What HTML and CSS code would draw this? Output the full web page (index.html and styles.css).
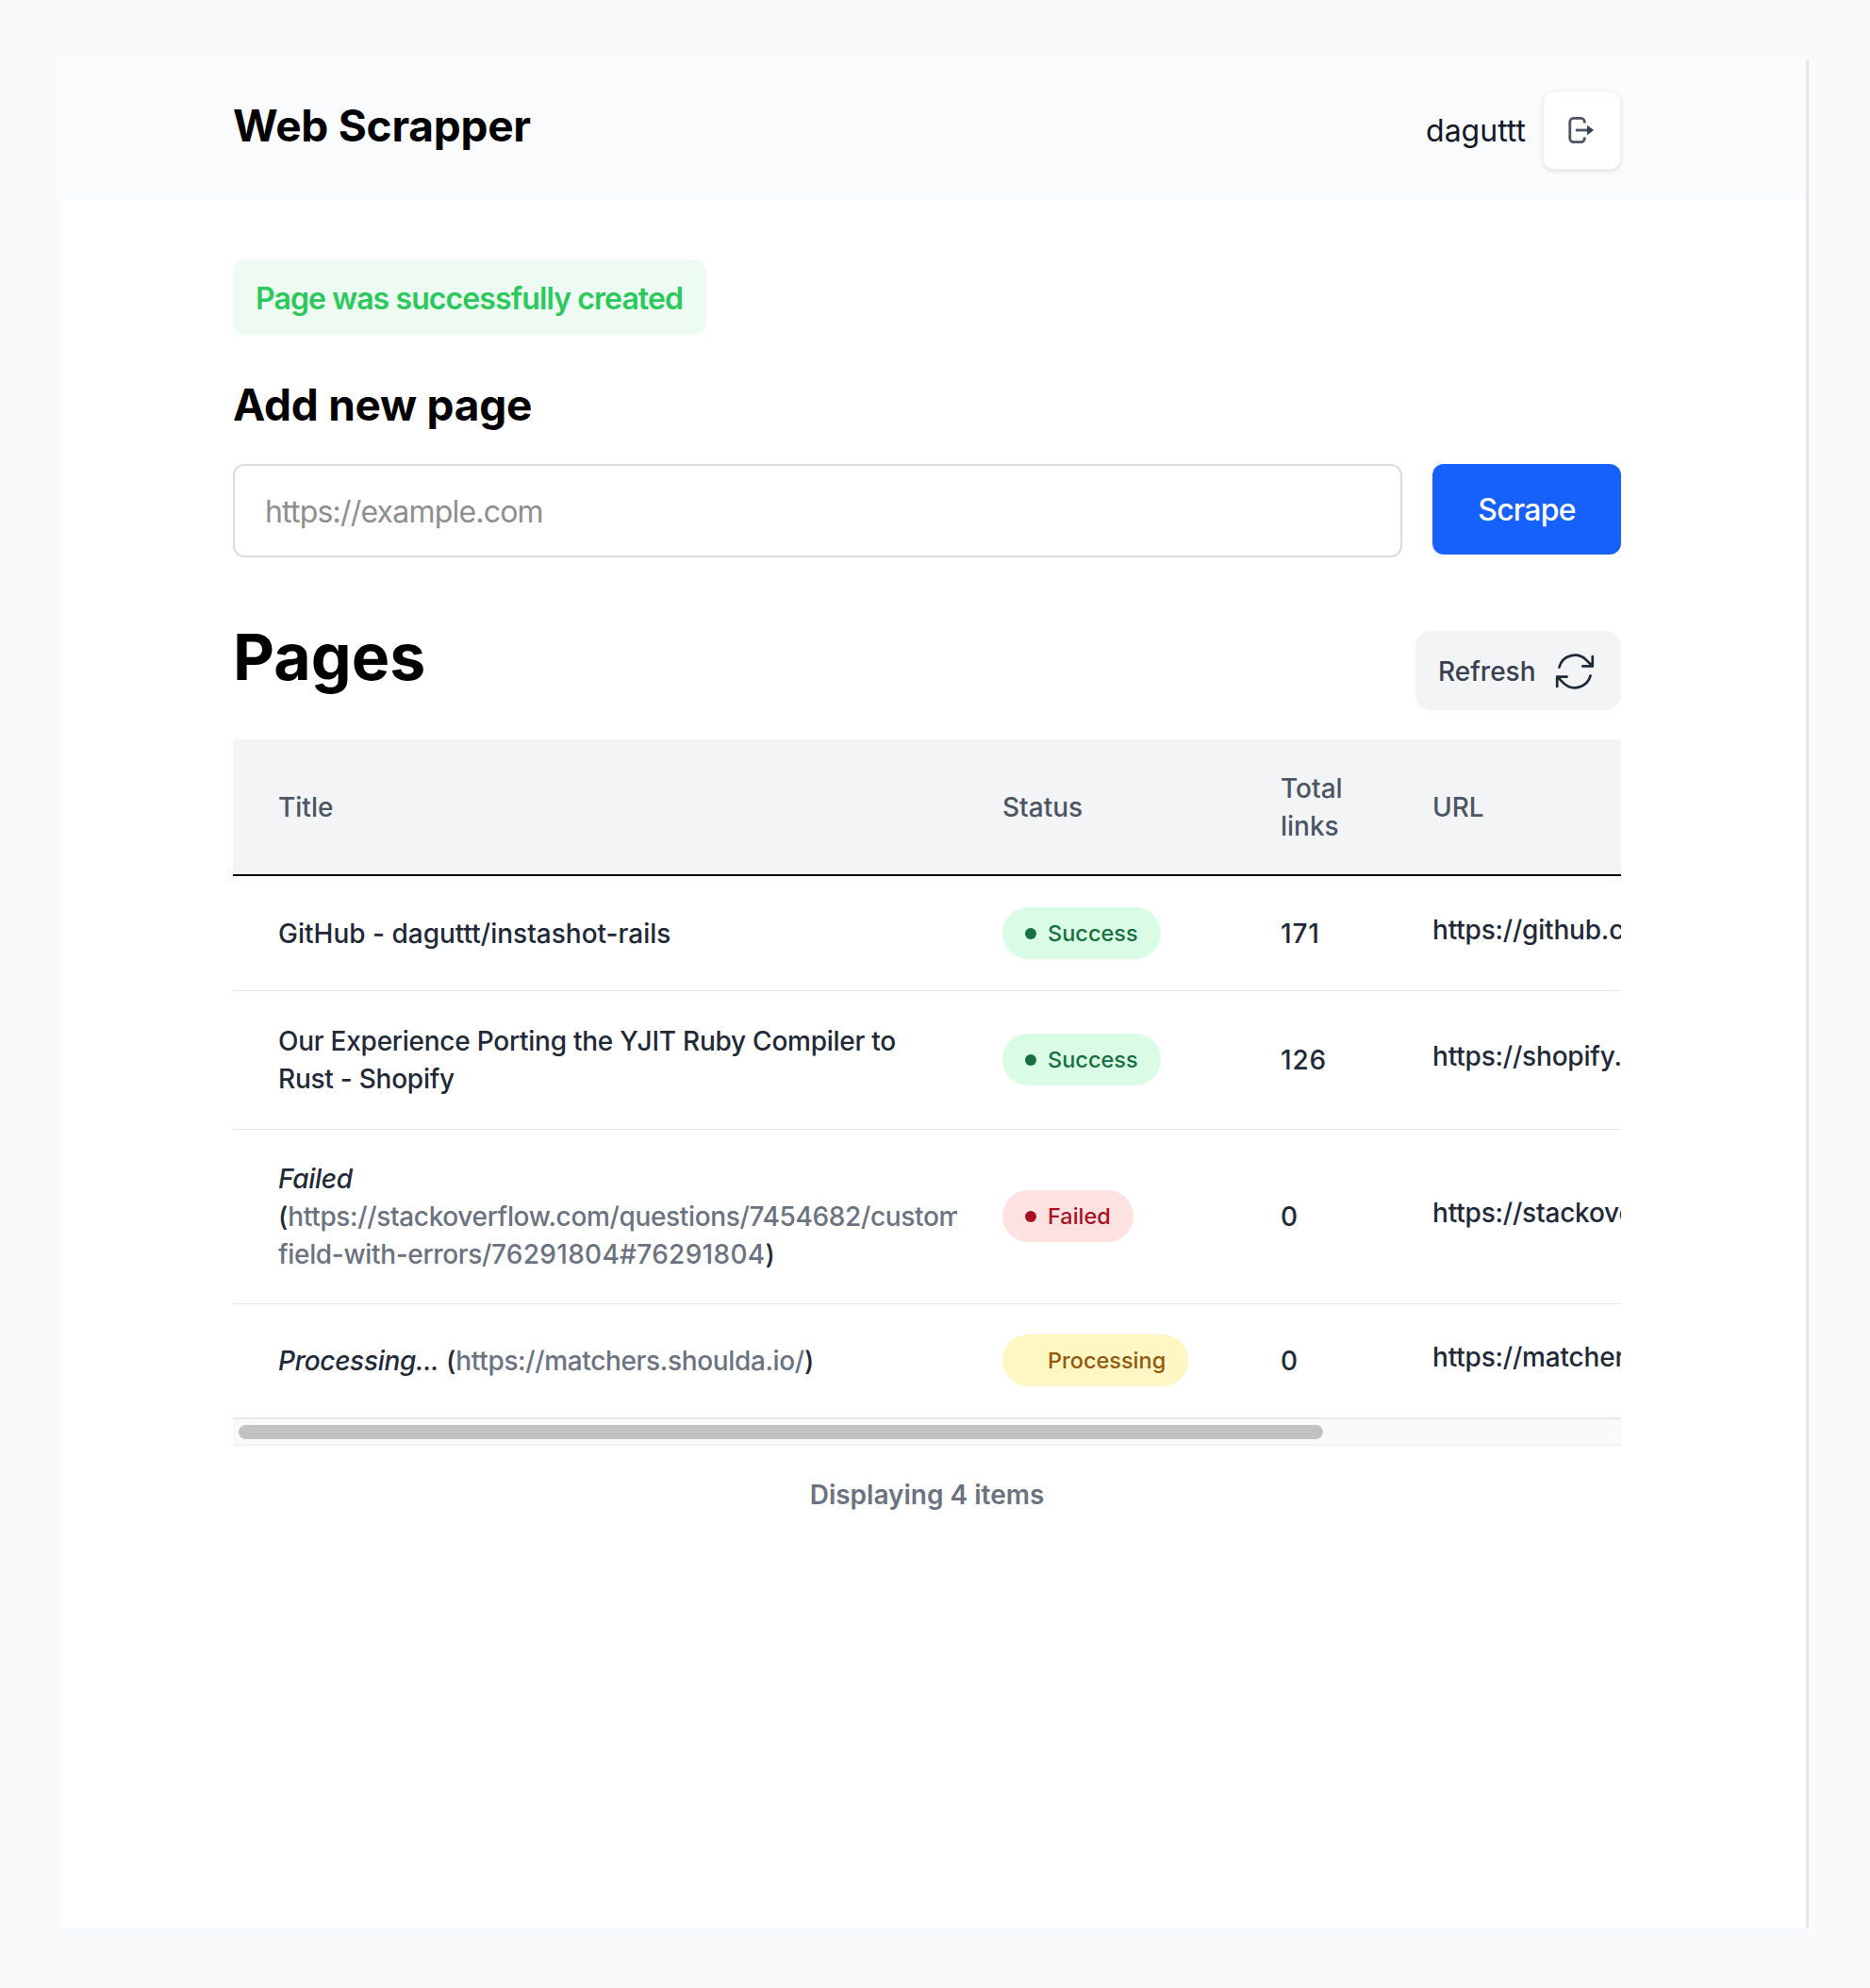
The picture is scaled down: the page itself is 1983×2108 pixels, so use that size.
FILE: index.html
```html
<!DOCTYPE html>
<html lang="en">
<head>
<meta charset="utf-8">
<title>Web Scrapper</title>
<link rel="stylesheet" href="styles.css">
</head>
<body>
<div class="frame">
  <header class="topbar">
    <h1 class="brand">Web Scrapper</h1>
    <div class="user">
      <span class="username">daguttt</span>
      <button class="logout" type="button" aria-label="Log out">
        <svg class="logout-icon" viewBox="0 0 30 32" fill="none" aria-hidden="true">
          <path d="M19 8V6.500A4 4 0 0 0 15 2.500H6.500A4 4 0 0 0 2.500 6.500V25.500A4 4 0 0 0 6.500 29.500H15A4 4 0 0 0 19 25.500V24" stroke="#4b5563" stroke-width="3"/>
          <path d="M9 16H23" stroke="#4b5563" stroke-width="3"/>
          <path d="M22 10.500L29.500 16L22 21.500Z" fill="#374151"/>
        </svg>
      </button>
    </div>
  </header>
  <main class="content">
    <div class="flash">Page was successfully created</div>
    <h2 class="section-title">Add new page</h2>
    <form class="add-form">
      <input class="url-input" type="text" placeholder="https://example.com">
      <button class="scrape" type="button">Scrape</button>
    </form>
    <div class="pages-head">
      <h2 class="pages-title">Pages</h2>
      <button class="refresh" type="button">
        <span>Refresh</span>
        <svg class="refresh-icon" viewBox="0 0 24 24" fill="none" stroke="#1f2937" stroke-width="1.300" stroke-linecap="round" stroke-linejoin="round" aria-hidden="true">
          <path d="M16.023 9.348h4.992v-.001M2.985 19.644v-4.992m0 0h4.992m-4.993 0l3.181 3.183a8.25 8.25 0 0013.803-3.7M4.031 9.865a8.25 8.250 0 0113.803-3.700l3.181 3.182m0-4.991v4.990"/>
        </svg>
      </button>
    </div>
    <div class="table-wrap">
      <table class="pages-table">
        <colgroup>
          <col class="col-title"><col class="col-status"><col class="col-total"><col class="col-url">
        </colgroup>
        <thead>
          <tr><th>Title</th><th>Status</th><th>Total links</th><th>URL</th></tr>
        </thead>
        <tbody>
          <tr>
            <td><div class="title-cell">GitHub - daguttt/instashot-rails</div></td>
            <td><span class="pill pill-success"><i class="dot"></i>Success</span></td>
            <td class="num">171</td>
            <td><span class="url">https://github.com/daguttt/instashot-rails</span></td>
          </tr>
          <tr>
            <td><div class="title-cell title-tight">Our Experience Porting the YJIT Ruby Compiler to Rust - Shopify</div></td>
            <td><span class="pill pill-success"><i class="dot"></i>Success</span></td>
            <td class="num">126</td>
            <td><span class="url">https://shopify.engineering/porting-yjit-ruby-compiler-to-rust</span></td>
          </tr>
          <tr>
            <td><div class="title-cell"><em>Failed</em> (<a class="link" href="#">https://stackoverflow.com/questions/7454682/custom-field-with-errors/<span class="digits">76291804#76291804</span></a>)</div></td>
            <td><span class="pill pill-failed"><i class="dot"></i>Failed</span></td>
            <td class="num">0</td>
            <td><span class="url">https://stackoverflow.com/questions/7454682/custom-field-with-errors</span></td>
          </tr>
          <tr>
            <td><div class="title-cell"><em>Processing...</em> (<a class="link" href="#">https://matchers.shoulda.io/</a>)</div></td>
            <td><span class="pill pill-processing"><i class="dot"></i>Processing</span></td>
            <td class="num">0</td>
            <td><span class="url">https://matchers.shoulda.io/</span></td>
          </tr>
        </tbody>
      </table>
    </div>
    <div class="scrollbar"><div class="thumb"></div></div>
    <p class="count">Displaying 4 items</p>
  </main>
</div>
</body>
</html>
```
FILE: styles.css
```css
* { box-sizing: border-box; }
html, body { margin: 0; }
body {
  background: #f9fafc;
  padding: 64px 65px 64px 64px;
  font-family: Inter, "Noto Sans", sans-serif;
  color: #1f2937;
}
.frame {
  height: 1980px;
  background: #fff;
  border-right: 3px solid #e5e5e5;
}
.topbar {
  height: 148px;
  background: #fafbfd;
  padding: 32px 196px 0 183px;
  display: flex;
  justify-content: space-between;
  align-items: flex-start;
}
.brand {
  margin: 0;
  font-size: 46px;
  line-height: 74px;
  font-weight: 700;
  letter-spacing: -0.25px;
  color: #000;
}
.user { display: flex; align-items: center; gap: 18px; }
.username { font-size: 32px; color: #111827; }
.logout {
  width: 83px;
  height: 84px;
  padding: 0 2px 0 0;
  display: flex;
  align-items: center;
  justify-content: center;
  background: #fff;
  border: 1px solid #f0f1f3;
  border-radius: 12px;
  box-shadow: 0 2px 4px rgba(0,0,0,.1);
}
.logout-icon { width: 29px; height: 30px; }
.content { padding: 64px 196px 0 183px; }
.flash {
  width: 502px;
  height: 79px;
  padding: 2px 24px 0;
  display: flex;
  align-items: center;
  background: #edfbf3;
  border-radius: 12px;
  color: #2cc85c;
  font-size: 32px;
  font-weight: 600;
  letter-spacing: -0.9px;
  white-space: nowrap;
}
.section-title {
  margin: 44px 0 33px;
  font-size: 46px;
  line-height: 60px;
  font-weight: 700;
  letter-spacing: -0.25px;
  color: #000;
}
.add-form { display: flex; align-items: flex-start; gap: 32px; }
.url-input {
  flex: 1;
  height: 99px;
  padding: 2px 32px 0;
  border: 2px solid #d9dce1;
  border-radius: 12px;
  font: 400 32px Inter, sans-serif;
  letter-spacing: -0.8px;
  color: #111827;
  outline: none;
}
.url-input::placeholder { color: #8e8e8e; opacity: 1; }
.scrape {
  width: 200px;
  height: 96px;
  padding: 0;
  background: #1660fb;
  border: 0;
  border-radius: 12px;
  color: #fff;
  font: 500 32px Inter, sans-serif;
  letter-spacing: -0.8px;
}
.pages-head {
  margin-top: 78px;
  display: flex;
  justify-content: space-between;
  align-items: flex-start;
}
.pages-title {
  margin: 0;
  font-size: 68px;
  line-height: 54px;
  font-weight: 700;
  color: #000;
}
.refresh {
  width: 218px;
  height: 84px;
  padding: 2px 24px 0 24px;
  display: flex;
  align-items: center;
  justify-content: space-between;
  background: #f3f4f6;
  border: 0;
  border-radius: 16px;
  color: #374151;
  font: 500 28px Inter, sans-serif;
}
.refresh-icon { width: 50px; height: 50px; }
.table-wrap { margin-top: 31px; overflow: hidden; }
.pages-table {
  width: 1900px;
  table-layout: fixed;
  border-collapse: collapse;
  font-size: 28px;
  line-height: 40px;
  font-weight: 500;
}
.col-title { width: 816px; }
.col-status { width: 295px; }
.col-total { width: 161px; }
.col-url { width: 628px; }
.pages-table th {
  height: 144px;
  padding: 0 48px 0 0;
  background: #f3f4f6;
  border-bottom: 2px solid #000;
  color: #4b5563;
  text-align: left;
  font-weight: 500;
}
.pages-table th:first-child, .pages-table td:first-child { padding-left: 48px; }
.pages-table td {
  padding: 32.6px 48px 32.6px 0;
  border-bottom: 1px solid #e5e7eb;
  vertical-align: middle;
}
.pages-table tbody tr:first-child td { padding-top: 33.2px; padding-bottom: 33.2px; }
.pages-table tbody tr:nth-child(3) td { padding-top: 32px; padding-bottom: 32px; }
.title-cell { width: 720px; overflow: hidden; }
.title-tight { letter-spacing: -0.25px; padding-right: 40px; }
.title-cell em { letter-spacing: -0.3px; }
.link { color: #6b7280; text-decoration: none; letter-spacing: -0.35px; }
.digits { letter-spacing: 0.3px; }
.num { letter-spacing: 0.8px; }
.url { display: block; margin-bottom: 8px; white-space: nowrap; letter-spacing: -0.2px; }
.pill {
  display: inline-flex;
  align-items: center;
  height: 55px;
  padding: 0 24px;
  border-radius: 28px;
  font-size: 23.5px;
  vertical-align: middle;
}
.dot {
  width: 12px;
  height: 12px;
  margin-right: 12px;
  border-radius: 50%;
  background: currentColor;
}
.pill-success { background: #dafbe6; color: #166f3f; }
.pill-failed { background: #fee2e2; color: #a81123; }
.pill-processing { background: #fef6c3; color: #92590c; }
.pill-processing .dot { background: transparent; }
.scrollbar {
  height: 29px;
  padding: 6px 5px 6px 6px;
  background: #fafafa;
  border-top: 1px solid #ececec;
  border-bottom: 1px solid #ececec;
}
.thumb { width: 78.700%; height: 100%; background: #c2c2c2; border-radius: 8px; }
.count {
  margin: 32px 0 0;
  text-align: center;
  font-size: 28px;
  line-height: 40px;
  font-weight: 600;
  color: #6b7280;
}
```
